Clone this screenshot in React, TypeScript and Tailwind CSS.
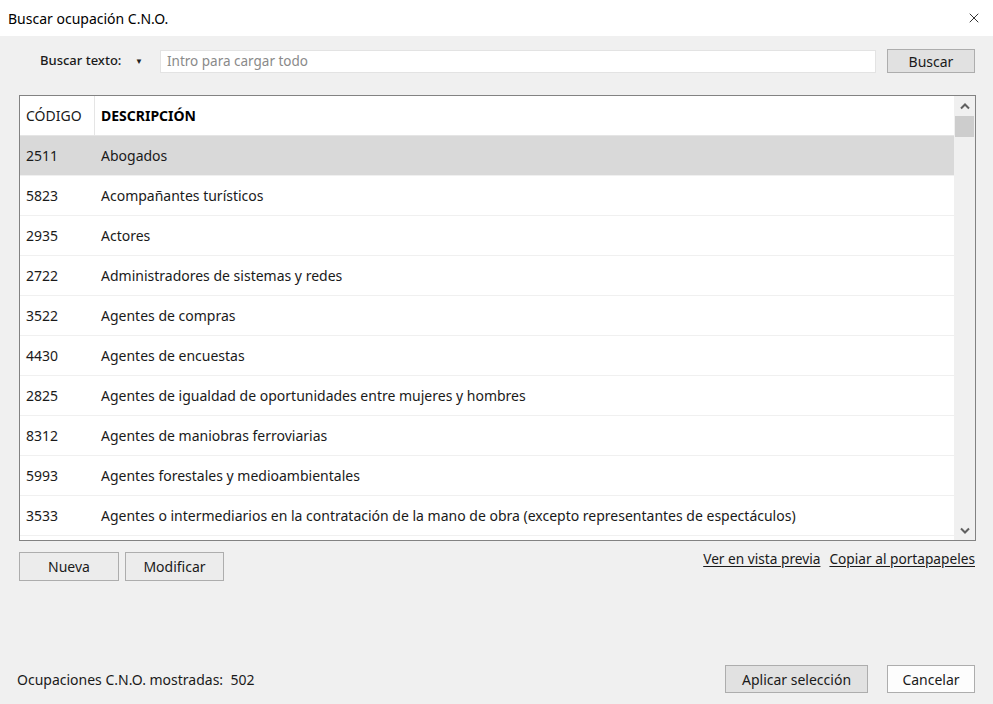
import { X } from "lucide-react";

const ROWS: Array<[string, string]> = [
  ["2511", "Abogados"],
  ["5823", "Acompañantes turísticos"],
  ["2935", "Actores"],
  ["2722", "Administradores de sistemas y redes"],
  ["3522", "Agentes de compras"],
  ["4430", "Agentes de encuestas"],
  ["2825", "Agentes de igualdad de oportunidades entre mujeres y hombres"],
  ["8312", "Agentes de maniobras ferroviarias"],
  ["5993", "Agentes forestales y medioambientales"],
  ["3533", "Agentes o intermediarios en la contratación de la mano de obra (excepto representantes de espectáculos)"],
];

function WinButton({
  label,
  className = "",
}: {
  label: string;
  className?: string;
}) {
  return (
    <button
      className={
        "flex items-center justify-center border border-[#adadad] text-[14px] text-[#1a1a1a] " +
        className
      }
    >
      {label}
    </button>
  );
}

export default function App() {
  return (
    <div
      className="flex h-[704px] w-[993px] flex-col overflow-hidden bg-[#f0f0f0] text-[14px] text-[#1a1a1a]"
      style={{ fontFamily: '"Noto Sans", "Open Sans", sans-serif' }}
    >
      {/* title bar */}
      <div className="flex h-9 shrink-0 items-center justify-between bg-white pl-2 pr-[11px]">
        <span className="text-[14px] text-black">Buscar ocupación C.N.O.</span>
        <X className="h-[16px] w-[16px] text-black" strokeWidth={1.2} />
      </div>

      {/* search row */}
      <div className="mt-[13px] flex h-6 items-center pl-[40px] pr-[18px]">
        <span className="w-[92px] text-[13px] font-medium text-[#1a1a1a]">Buscar texto:</span>
        <span className="flex w-[14px] justify-center text-[8px] text-[#222]">▼</span>
        <div className="ml-[14px] flex h-[23px] w-[716px] items-center border border-[#e3e3e3] bg-white pl-[6px] text-[13.5px] text-[#8a8a8a]">
          Intro para cargar todo
        </div>
        <WinButton label="Buscar" className="ml-[11px] h-6 w-[88px] bg-[#e1e1e1]" />
      </div>

      {/* table */}
      <div className="ml-[19px] mt-[22px] flex h-[446px] w-[957px] border border-[#828282] bg-white">
        <div className="flex min-w-0 flex-1 flex-col overflow-hidden">
          <div className="flex h-10 shrink-0 border-b border-[#e5e5e5]">
            <div className="flex w-[75px] items-center border-r border-[#e5e5e5] pl-[6px]">CÓDIGO</div>
            <div className="flex items-center pl-[6px] font-bold text-black">DESCRIPCIÓN</div>
          </div>
          {ROWS.map(([code, desc], i) => (
            <div
              key={code}
              className={
                "flex h-10 shrink-0 items-center border-b border-[#f0f0f0] " +
                (i === 0 ? "bg-[#d9d9d9]" : "")
              }
            >
              <div className="w-[75px] pl-[6px]">{code}</div>
              <div className="pl-[6px] whitespace-nowrap">{desc}</div>
            </div>
          ))}
        </div>
        {/* scrollbar */}
        <div className="flex w-[21px] shrink-0 flex-col bg-[#f0f0f0]">
          <div className="flex h-[20px] items-center justify-center">
            <svg width="10" height="7" viewBox="0 0 10 7">
              <path d="M1 5.5 L5 1.5 L9 5.5" fill="none" stroke="#606060" strokeWidth="2" />
            </svg>
          </div>
          <div className="mx-[1px] h-[21px] bg-[#cdcdcd]" />
          <div className="flex-1" />
          <div className="flex h-[20px] items-center justify-center">
            <svg width="10" height="7" viewBox="0 0 10 7">
              <path d="M1 1.5 L5 5.5 L9 1.5" fill="none" stroke="#606060" strokeWidth="2" />
            </svg>
          </div>
        </div>
      </div>

      {/* buttons + links */}
      <div className="mt-[11px] flex items-start pl-[19px] pr-[18px]">
        <WinButton label="Nueva" className="h-[29px] w-[100px] bg-[#ececec]" />
        <WinButton label="Modificar" className="ml-[6px] h-[29px] w-[99px] bg-[#ececec]" />
        <div className="ml-auto -mt-[3px] flex gap-[9px] text-[13.7px] text-[#1a1a1a]">
          <a className="underline underline-offset-2">Ver en vista previa</a>
          <a className="underline underline-offset-2">Copiar al portapapeles</a>
        </div>
      </div>

      <div className="flex-1" />

      {/* footer */}
      <div className="mb-[11px] flex items-center pl-[17px] pr-[18px]">
        <span>Ocupaciones C.N.O. mostradas:&nbsp; 502</span>
        <WinButton label="Aplicar selección" className="ml-auto h-[28px] w-[143px] bg-[#e1e1e1]" />
        <WinButton label="Cancelar" className="ml-[19px] h-[28px] w-[88px] bg-[#fdfdfd]" />
      </div>
    </div>
  );
}
